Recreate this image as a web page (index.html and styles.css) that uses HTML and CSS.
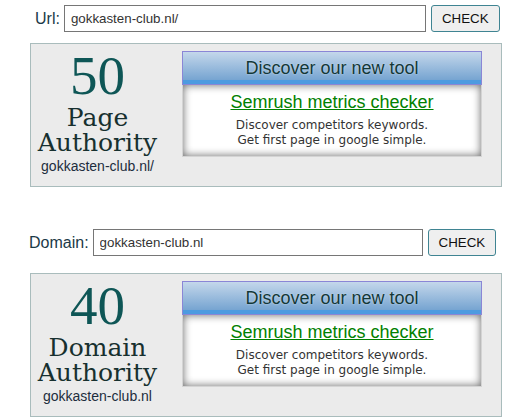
FILE: index.html
```html
<!DOCTYPE html>
<html lang="en">
<head>
    <meta charset="UTF-8">
    <meta name="viewport" content="width=device-width, initial-scale=1.0">
    <title>Page and Domain Authority Checker</title>
    <link rel="stylesheet" href="styles.css">
</head>
<body>
    <!-- Page authority -->
    <form class="check-row url-row">
        <label for="url">Url:</label>
        <input type="text" id="url" class="url-input" value="gokkasten-club.nl/">
        <button type="button" class="check-btn">CHECK</button>
    </form>

    <div class="result-box">
        <div class="score-col">
            <div class="score">50</div>
            <div class="score-label">Page Authority</div>
            <div class="score-site">gokkasten-club.nl/</div>
        </div>
        <div class="promo">
            <div class="promo-head">Discover our new tool</div>
            <div class="promo-body">
                <a href="#" class="promo-link">Semrush metrics checker</a>
                <p>Discover competitors keywords.<br>Get first page in google simple.</p>
            </div>
        </div>
    </div>

    <!-- Domain authority -->
    <form class="check-row domain-row">
        <label for="domain">Domain:</label>
        <input type="text" id="domain" class="domain-input" value="gokkasten-club.nl">
        <button type="button" class="check-btn">CHECK</button>
    </form>

    <div class="result-box">
        <div class="score-col">
            <div class="score">40</div>
            <div class="score-label">Domain Authority</div>
            <div class="score-site">gokkasten-club.nl</div>
        </div>
        <div class="promo">
            <div class="promo-head">Discover our new tool</div>
            <div class="promo-body">
                <a href="#" class="promo-link">Semrush metrics checker</a>
                <p>Discover competitors keywords.<br>Get first page in google simple.</p>
            </div>
        </div>
    </div>
</body>
</html>
```

FILE: styles.css
```css
body {
    margin: 0;
    padding-top: 5px;
    font-family: "Liberation Sans", Arial, sans-serif;
    background: #fff;
}
.check-row {
    display: flex;
    align-items: center;
    height: 27px;
    margin: 0;
}
.url-row {
    padding-left: 35px;
}
.domain-row {
    margin-top: 42px;
    padding-left: 29px;
}
.check-row label {
    font-size: 16px;
    color: #1b3a48;
    margin-right: 4px;
}
.check-row input {
    box-sizing: border-box;
    height: 27px;
    border: 1px solid #767676;
    padding: 0 6px;
    font-family: "Liberation Sans", Arial, sans-serif;
    font-size: 13.33px;
    color: #333;
    background: #fff;
}
.url-input {
    width: 362px;
}
.domain-input {
    width: 330px;
}
.check-btn {
    box-sizing: border-box;
    height: 27px;
    margin-left: 5px;
    padding: 0 10px;
    background: #efefef;
    border: 1px solid #3f8492;
    border-radius: 3px;
    font-family: "Liberation Sans", Arial, sans-serif;
    font-size: 13.33px;
    color: #111;
    cursor: pointer;
}
.result-box {
    box-sizing: border-box;
    display: flex;
    align-items: flex-start;
    width: 472px;
    height: 144px;
    margin: 11px 0 0 30px;
    background: #ebebeb;
    border: 1px solid #a9bcbc;
}
.domain-row + .result-box {
    margin-top: 17px;
}
.score-col {
    width: 133px;
    padding-top: 4px;
    text-align: center;
}
.score {
    font-family: "Liberation Serif", "Times New Roman", serif;
    font-size: 55px;
    line-height: 55px;
    color: #0e5656;
}
.score-label {
    margin-top: 2px;
    font-family: "DejaVu Serif", Georgia, serif;
    font-size: 25px;
    line-height: 25px;
    color: #17302f;
}
.score-site {
    margin-top: 1px;
    font-size: 14px;
    line-height: 20px;
    color: #1d2d3d;
}
.promo {
    width: 300px;
    margin: 7px 0 0 18px;
}
.promo-head {
    height: 32px;
    line-height: 32px;
    text-align: center;
    font-size: 18px;
    color: #123838;
    text-shadow: 0 0 2px rgba(255,255,255,0.6);
    background: linear-gradient(#c4d7eb, #6b9dcd);
    border: 1px solid #8a86d6;
    box-shadow: inset 0 -4px 0 #4d9be0, inset 0 -3px 0 #62b2ee;
}
.promo-body {
    box-sizing: border-box;
    height: 72px;
    padding-top: 6px;
    text-align: center;
    background: #fff;
    border: 1px solid #d4d4d4;
    border-top: none;
    box-shadow: inset 0 0 9px rgba(0,0,0,0.6);
}
.promo-link {
    display: inline-block;
    font-size: 18px;
    line-height: 22px;
    color: #008000;
}
.promo-body p {
    margin: 5px 0 0 0;
    font-family: "DejaVu Sans", Verdana, sans-serif;
    font-size: 12px;
    line-height: 15px;
    color: #333;
}
```
